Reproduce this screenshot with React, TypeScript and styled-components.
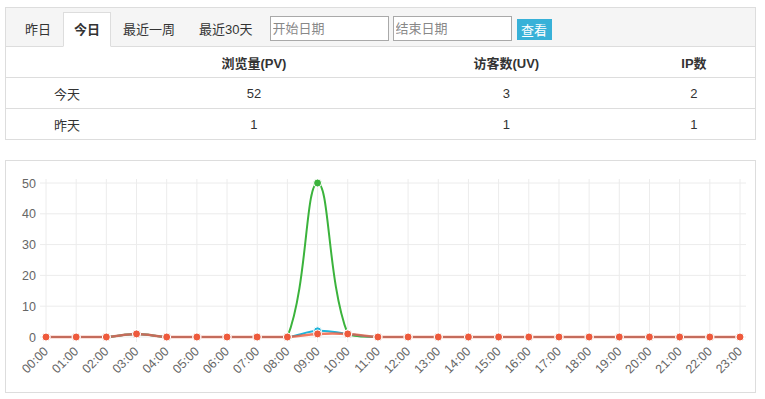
import styled, { createGlobalStyle } from 'styled-components'

const GlobalStyle = createGlobalStyle`
	body {
		margin: 0;
		background: #fff;
		font-family: Arial, "Liberation Sans", "Noto Sans CJK SC", sans-serif;
		color: #333;
	}
`

const Page = styled.div`
	width: 751px;
	padding: 7px 0 0 5px;
	display: flex;
	flex-direction: column;
	gap: 20px;
`

const Panel = styled.section`
	border: 1px solid #ddd;
	background: #fff;
`

const TabBar = styled.div`
	display: flex;
	align-items: flex-end;
	height: 38px;
	padding-left: 7px;
	background: #f5f5f5;
	border-bottom: 1px solid #ddd;
`

const Tab = styled.div<{ $active?: boolean }>`
	height: 35px;
	box-sizing: border-box;
	padding: 0 ${p => (p.$active ? 10 : 11)}px 3px;
	margin-bottom: -1px;
	display: flex;
	align-items: center;
	font-size: 13px;
	color: #333;
	font-weight: ${p => (p.$active ? 700 : 400)};
	background: ${p => (p.$active ? '#fff' : 'transparent')};
	border: 1px solid ${p => (p.$active ? '#ddd' : 'transparent')};
	border-bottom-color: ${p => (p.$active ? '#fff' : 'transparent')};
`

const DateGroup = styled.div`
	display: flex;
	align-items: flex-end;
	gap: 4px;
	margin-left: 5px;
	padding-bottom: 5px;
`

const DateInput = styled.input`
	width: 119px;
	height: 25px;
	box-sizing: border-box;
	margin: 0;
	padding: 0 2px;
	border: 1px solid #a9a9a9;
	font-size: 13px;
	font-family: inherit;
	&::placeholder {
		color: #888;
	}
`

const Button = styled.button`
	height: 21px;
	width: 35px;
	margin: 0 0 1px 1px;
	padding: 0;
	border: none;
	background: #38b1d8;
	color: #fff;
	font-size: 13px;
	font-family: inherit;
`

const Table = styled.table`
	width: 100%;
	border-collapse: collapse;
	font-size: 13px;
	table-layout: fixed;
`

const Th = styled.th`
	height: 30px;
	font-weight: 700;
	text-align: center;
	border-bottom: 1px solid #ddd;
	padding: 0;
`

const Td = styled.td`
	height: 30px;
	text-align: center;
	padding: 0;
	border-top: 1px solid #ddd;
`

const ChartBox = styled(Panel)`
	height: 231px;
	svg {
		display: block;
	}
`

const hours = Array.from({ length: 24 }, (_, i) => `${String(i).padStart(2, '0')}:00`)

const series = [
	{ color: '#3bb33c', data: hours.map((_, i) => (i === 3 ? 1 : i === 9 ? 50 : i === 10 ? 1 : 0)), op: 1, w: 2 },
	{ color: '#1fb3d9', data: hours.map((_, i) => (i === 3 ? 1 : i === 9 ? 2 : i === 10 ? 1 : 0)), op: 1, w: 2 },
	{ color: '#ee5a3c', data: hours.map((_, i) => (i === 3 || i === 9 || i === 10 ? 1 : 0)), op: 0.8, w: 2.5 },
]

const X0 = 40
const STEP = 694 / 23
const Y0 = 176
const SCALE = 154 / 50

function curve(data: number[]) {
	const pts = data.map((v, i) => ({ x: X0 + i * STEP, y: Y0 - v * SCALE }))
	const t = 0.4
	const cps = pts.map((p, i) => {
		const prev = pts[i - 1] || p
		const next = pts[i + 1] || p
		const d01 = Math.hypot(p.x - prev.x, p.y - prev.y)
		const d12 = Math.hypot(next.x - p.x, next.y - p.y)
		const sum = d01 + d12 || 1
		const fa = (t * d01) / sum
		const fb = (t * d12) / sum
		const cap = (y: number) => Math.min(Y0, Math.max(10, y))
		return {
			px: p.x - fa * (next.x - prev.x),
			py: cap(p.y - fa * (next.y - prev.y)),
			nx: p.x + fb * (next.x - prev.x),
			ny: cap(p.y + fb * (next.y - prev.y)),
		}
	})
	let d = `M${pts[0].x},${pts[0].y}`
	for (let i = 1; i < pts.length; i++) {
		d += ` C${cps[i - 1].nx},${cps[i - 1].ny} ${cps[i].px},${cps[i].py} ${pts[i].x},${pts[i].y}`
	}
	return { d, pts }
}

const Chart = () => (
	<svg width="749" height="229">
		{[0, 10, 20, 30, 40, 50].map(v => (
			<g key={v}>
				<line x1={X0 - 6} x2={740} y1={Y0 - v * SCALE} y2={Y0 - v * SCALE} stroke="#ececec" />
				<text x={30} y={Y0 - v * SCALE + 4.5} textAnchor="end" fontSize="12.5" fill="#666">{v}</text>
			</g>
		))}
		{hours.map((h, i) => {
			const x = X0 + i * STEP
			return (
				<g key={h}>
					<line x1={x} x2={x} y1={18} y2={Y0 + 5} stroke="#ececec" />
					<text
						x={x + 3}
						y={Y0 + 15}
						textAnchor="end"
						fontSize="12.5"
						fill="#666"
						transform={`rotate(-45 ${x + 3} ${Y0 + 15})`}
					>
						{h}
					</text>
				</g>
			)
		})}
		{series.map(s => {
			const { d } = curve(s.data)
			return <path key={s.color} d={d} fill="none" stroke={s.color} strokeWidth={s.w} strokeOpacity={s.op} />
		})}
		{series.map(s => {
			const { pts } = curve(s.data)
			return pts.map((p, i) => (
				<circle key={s.color + i} cx={p.x} cy={p.y} r="4" fill={s.color} stroke="#fff" strokeWidth="1" />
			))
		})}
	</svg>
)

const App = () => (
	<>
		<GlobalStyle />
		<Page>
			<Panel>
				<TabBar>
					<Tab>昨日</Tab>
					<Tab $active>今日</Tab>
					<Tab>最近一周</Tab>
					<Tab>最近30天</Tab>
					<DateGroup>
						<DateInput placeholder="开始日期" />
						<DateInput placeholder="结束日期" />
						<Button>查看</Button>
					</DateGroup>
				</TabBar>
				<Table>
					<colgroup>
						<col style={{ width: '16.3%' }} />
						<col style={{ width: '33.6%' }} />
						<col style={{ width: '33.8%' }} />
						<col />
					</colgroup>
					<thead>
						<tr>
							<Th></Th>
							<Th>浏览量(PV)</Th>
							<Th>访客数(UV)</Th>
							<Th>IP数</Th>
						</tr>
					</thead>
					<tbody>
						<tr>
							<Td>今天</Td>
							<Td>52</Td>
							<Td>3</Td>
							<Td>2</Td>
						</tr>
						<tr>
							<Td>昨天</Td>
							<Td>1</Td>
							<Td>1</Td>
							<Td>1</Td>
						</tr>
					</tbody>
				</Table>
			</Panel>
			<ChartBox>
				<Chart />
			</ChartBox>
		</Page>
	</>
)

export default App
